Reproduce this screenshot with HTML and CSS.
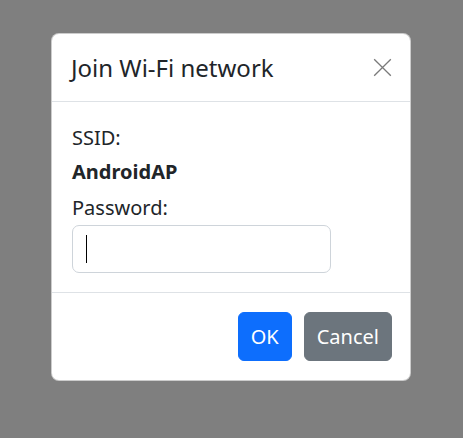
FILE: index.html
```html
<!DOCTYPE html>
<html lang="en">
<head>
<meta charset="utf-8">
<title>Join Wi-Fi network</title>
<link rel="stylesheet" href="styles.css">
</head>
<body>
<div class="backdrop">
  <div class="modal" role="dialog" aria-labelledby="modal-title">
    <div class="modal-header">
      <h5 class="modal-title" id="modal-title">Join Wi-Fi network</h5>
      <button class="btn-close" type="button" aria-label="Close">
        <svg viewBox="0 0 16 16" width="19" height="19" aria-hidden="true">
          <path d="M1 1 L15 15 M15 1 L1 15" stroke="currentColor" stroke-width="1.1" fill="none"/>
        </svg>
      </button>
    </div>
    <div class="modal-body">
      <div class="label ssid-label">SSID:</div>
      <div class="ssid">AndroidAP</div>
      <label class="label pw-label" for="pw">Password:</label>
      <div class="input-wrap">
        <input class="form-control" id="pw" type="password">
        <span class="caret"></span>
      </div>
    </div>
    <div class="modal-footer">
      <button class="btn btn-primary" type="button">OK</button>
      <button class="btn btn-secondary" type="button">Cancel</button>
    </div>
  </div>
</div>
</body>
</html>
```
FILE: styles.css
```css
* { box-sizing: border-box; }
html, body { margin: 0; padding: 0; }
body {
  background: #7f7f7f;
  font-family: "Noto Sans", "Open Sans", sans-serif;
  color: #212529;
  width: 463px;
  height: 438px;
  overflow: hidden;
}
.backdrop {
  display: flex;
  justify-content: center;
  padding: 33px 1px 0 0;
}
.modal {
  width: 360px;
  background: #fff;
  border: 1px solid rgba(0,0,0,.2);
  border-radius: 8px;
  display: flex;
  flex-direction: column;
}
.modal-header {
  height: 68px;
  display: flex;
  align-items: center;
  justify-content: space-between;
  padding: 0 18px 0 19px;
  border-bottom: 1px solid #dee2e6;
}
.modal-title {
  margin: 0;
  font-size: 24px;
  font-weight: 400;
  line-height: 30px;
}
.btn-close {
  border: 0;
  background: transparent;
  padding: 0;
  width: 19px;
  height: 19px;
  color: #7a7a7a;
  display: flex;
}
.modal-body {
  height: 190px;
  padding: 21px 20px 0 20px;
  display: flex;
  flex-direction: column;
}
.label {
  font-size: 20px;
  line-height: 30px;
  display: block;
}
.ssid-label { margin-bottom: 4px; }
.ssid {
  font-size: 20px;
  line-height: 30px;
  font-weight: 700;
  margin-bottom: 6px;
}
.pw-label { margin-bottom: 2px; }
.input-wrap {
  position: relative;
  width: 259px;
}
.form-control {
  display: block;
  width: 100%;
  height: 48px;
  border: 1px solid #ced4da;
  border-radius: 7px;
  padding: 0 14px;
  font-size: 20px;
  font-family: inherit;
  outline: none;
}
.caret {
  position: absolute;
  left: 14px;
  top: 10px;
  width: 1px;
  height: 28px;
  background: #000;
}
.modal-footer {
  border-top: 1px solid #dee2e6;
  display: flex;
  justify-content: flex-end;
  gap: 12px;
  padding: 19px 18px 19px;
}
.btn {
  font-family: inherit;
  font-size: 20px;
  line-height: 30px;
  padding: 9px 12px 8px;
  border: 1px solid transparent;
  border-radius: 6px;
  color: #fff;
}
.btn-primary { background: #0d6efd; border-color: #0d6efd; }
.btn-secondary { background: #6c757d; border-color: #6c757d; }
```
